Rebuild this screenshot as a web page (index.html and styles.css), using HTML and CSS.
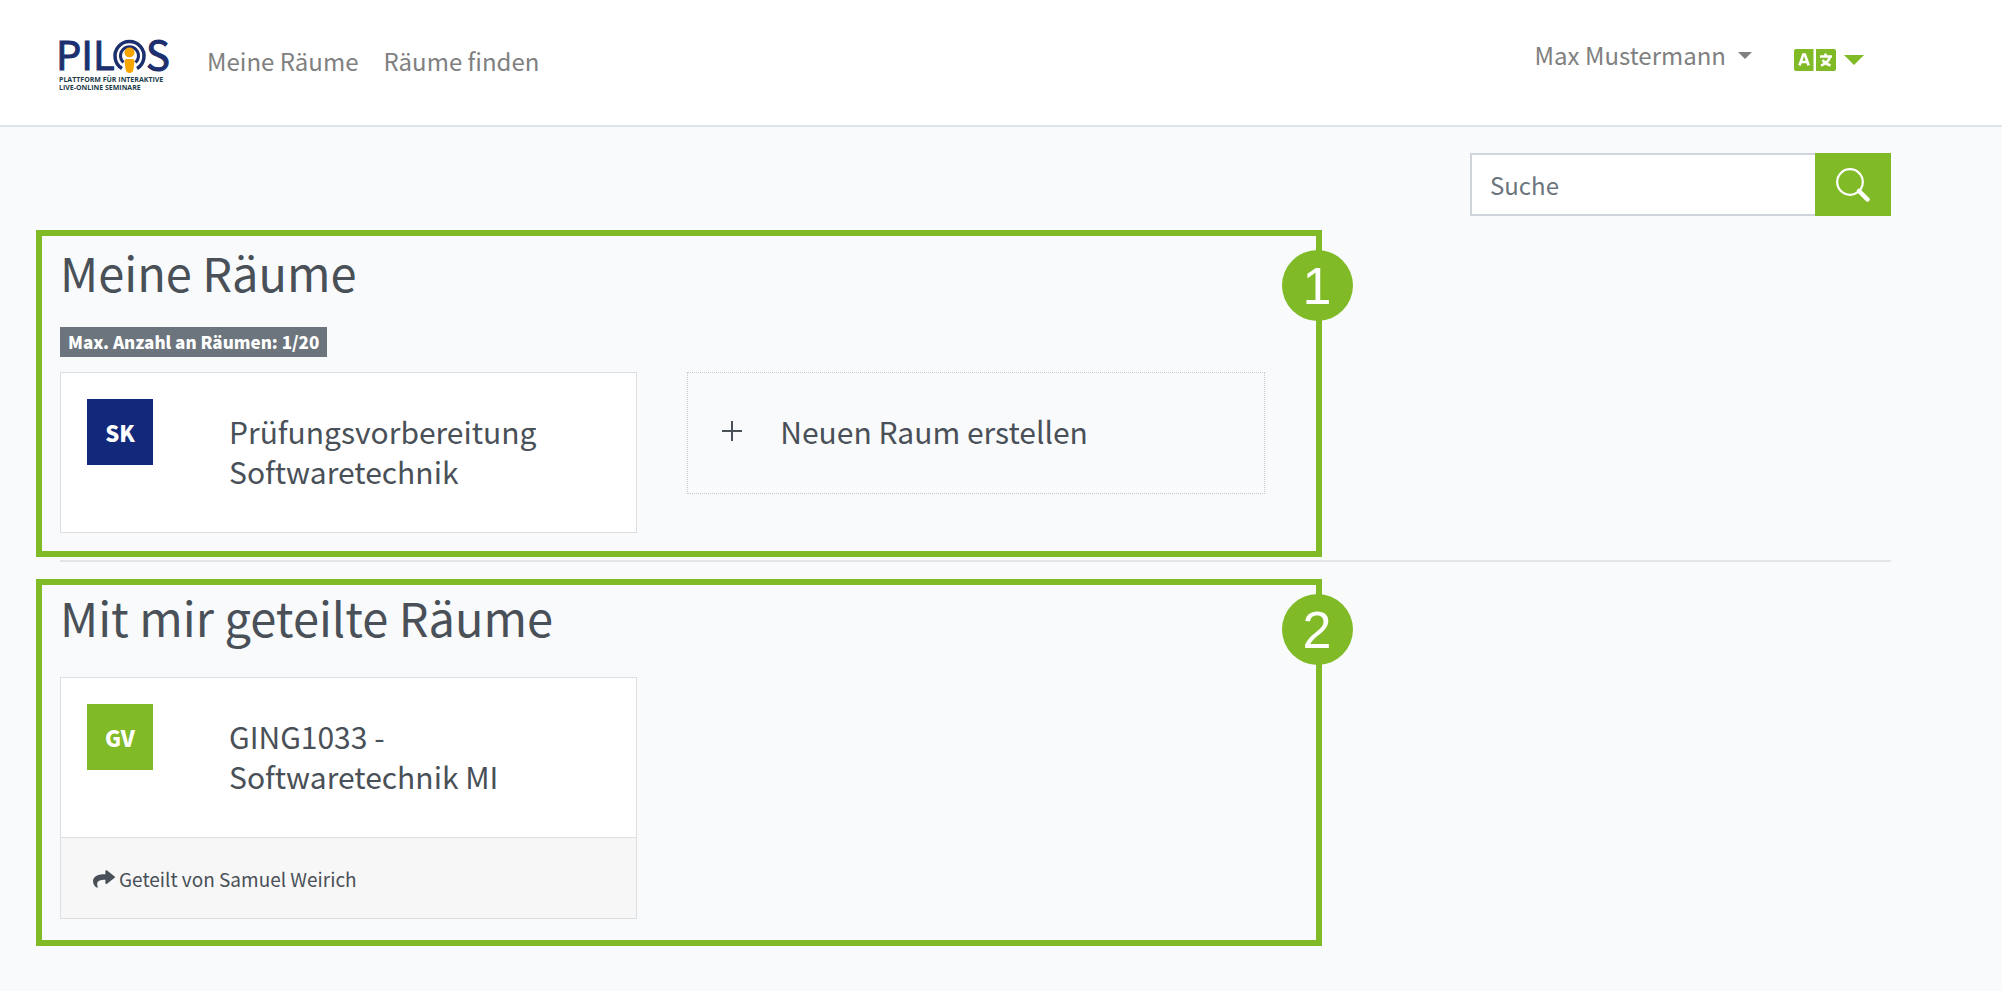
FILE: index.html
```html
<!DOCTYPE html>
<html lang="de">
<head>
<meta charset="utf-8">
<meta name="viewport" content="width=device-width, initial-scale=1">
<title>PILOS – Meine Räume</title>
<link rel="stylesheet" href="styles.css">
</head>
<body>
<header class="navbar">
  <a class="brand" href="#" aria-label="PILOS">
    <svg class="logo" viewBox="0 0 108 56" width="108" height="56">
      <g class="logo-word">
        <text x="-3" y="33">PIL</text>
        <text x="87" y="33">S</text>
      </g>
      <g fill="none" stroke="#1c2f6e" stroke-width="3.500">
        <path d="M63 31.500A14.500 14.500 0 1 1 78 31.500"/>
        <path d="M64.500 25.500A9 9 0 1 1 76.500 25.500" stroke-width="3"/>
      </g>
      <circle cx="70.500" cy="15.500" r="5" fill="#f7a600"/>
      <path d="M65.500 24q0-2 2-2h6q2 0 2 2l-1 8q-.5 4-4 4t-4-4z" fill="#f7a600"/>
      <g class="logo-claim">
        <text x="0" y="45">PLATTFORM FÜR INTERAKTIVE</text>
        <text x="0" y="53">LIVE-ONLINE SEMINARE</text>
      </g>
    </svg>
  </a>
  <nav class="nav-links">
    <a href="#">Meine Räume</a>
    <a href="#">Räume finden</a>
  </nav>
  <div class="nav-tools">
    <button class="user-menu" type="button">Max Mustermann
      <svg width="14" height="7" viewBox="0 0 14 7" aria-hidden="true"><path d="M0 0h14L7 7z" fill="currentColor"/></svg>
    </button>
    <button class="lang-menu" type="button" aria-label="Sprache">
      <svg width="42" height="22" viewBox="0 0 42 22" aria-hidden="true">
        <path d="M2 0h17.500v22H2q-2 0-2-2V2q0-2 2-2zM22 0h18q2 0 2 2v18q0 2-2 2H22z" fill="currentColor"/>
        <path d="M5.500 16.500L9.300 5.500h1.600l3.800 11M7 13h6.200" fill="none" stroke="#fff" stroke-width="2.600"/>
        <path d="M26 7.500h12M31.500 4.500v3M36 8q-2 6-9 8.500M28.500 11q3 4 8 5.500" fill="none" stroke="#fff" stroke-width="2.500"/>
      </svg>
      <svg width="20" height="10" viewBox="0 0 20 10" aria-hidden="true"><path d="M0 0h20L10 10z" fill="currentColor"/></svg>
    </button>
  </div>
</header>

<main class="content">
  <form class="search">
    <input type="search" placeholder="Suche" aria-label="Suche">
    <button type="submit" aria-label="Suchen">
      <svg width="34" height="34" viewBox="0 0 34 34" fill="none" stroke="#fff" aria-hidden="true">
        <circle cx="14" cy="14" r="12.800" stroke-width="2.200"/>
        <path d="M23 23l8.500 8.500" stroke-width="4.500" stroke-linecap="round"/>
      </svg>
    </button>
  </form>

  <section class="marked">
    <span class="marker">1</span>
    <h1>Meine Räume</h1>
    <p class="limit">Max. Anzahl an Räumen: 1/20</p>
    <div class="rooms">
      <article class="card">
        <div class="card-body">
          <span class="tile tile-own">SK</span>
          <h2>Prüfungsvorbereitung Softwaretechnik</h2>
        </div>
      </article>
      <button class="card card-new" type="button">
        <svg width="20" height="20" viewBox="0 0 20 20" aria-hidden="true"><path d="M10 0v20M0 10h20" stroke="currentColor" stroke-width="2"/></svg>
        <span>Neuen Raum erstellen</span>
      </button>
    </div>
  </section>

  <hr class="divider">

  <section class="marked marked-shared">
    <span class="marker">2</span>
    <h1>Mit mir geteilte Räume</h1>
    <div class="rooms">
      <article class="card">
        <div class="card-body">
          <span class="tile tile-shared">GV</span>
          <h2>GING1033 - Softwaretechnik MI</h2>
        </div>
        <footer class="card-footer">
          <svg width="22" height="20" viewBox="0 0 512 512" preserveAspectRatio="none" aria-hidden="true"><path fill="currentColor" d="M503.700 189.800L327.700 37.900C312.300 24.500 288 35.300 288 56v80.100C127.400 137.900 0 170.100 0 322.300c0 61.400 39.600 122.300 83.300 154.100 13.700 9.900 33.100-2.500 28.100-18.600C66.100 312.800 132.900 274.300 288 272.100V360c0 20.700 24.300 31.500 39.700 18.200l176-152c11.100-9.600 11.100-26.800 0-36.400z"/></svg>
          <span>Geteilt von Samuel Weirich</span>
        </footer>
      </article>
    </div>
  </section>
</main>
</body>
</html>
```
FILE: styles.css
```css
* {
  box-sizing: border-box;
}

body {
  margin: 0;
  min-height: 100vh;
  background: #f9fafc;
  color: #495057;
  font-family: "Noto Sans CJK SC", "Open Sans", sans-serif;
  font-size: 24px;
  line-height: 36px;
}

button {
  margin: 0;
  padding: 0;
  border: 0;
  background: none;
  color: inherit;
  font: inherit;
}

svg {
  display: block;
  flex: none;
}

.navbar {
  display: flex;
  align-items: flex-start;
  padding: 37px 138px 32px 59px;
  border-bottom: 2px solid #dfe4ec;
  background: #fff;
}

.logo {
  overflow: visible;
}

.logo-word {
  fill: #1c2f6e;
  stroke: #1c2f6e;
  stroke-width: 1px;
  font-size: 40px;
}

.logo-claim {
  fill: #1d3c4a;
  font-family: "Open Sans", sans-serif;
  font-size: 7px;
  font-weight: 700;
}

.nav-links {
  display: flex;
  gap: 25px;
  margin: 6px 0 0 40px;
}

.nav-links a {
  color: #808080;
  text-decoration: none;
}

.nav-tools {
  display: flex;
  align-items: center;
  gap: 42px;
  margin-left: auto;
}

.user-menu {
  display: flex;
  align-items: center;
  gap: 12px;
  color: #808080;
}

.lang-menu {
  display: flex;
  align-items: center;
  gap: 8px;
  padding-top: 10px;
  color: #80ba27;
}

.content {
  padding: 26px 111px 44px 36px;
}

.search {
  display: flex;
  width: 421px;
  max-width: 100%;
  margin: 0 0 14px auto;
}

.search input {
  flex: 1;
  min-width: 0;
  height: 63px;
  padding: 0 18px;
  border: 2px solid #ced4da;
  border-right: 0;
  border-radius: 0;
  background: #fff;
  color: #495057;
  font: inherit;
  appearance: none;
}

.search input::placeholder {
  color: #6c757d;
  opacity: 1;
}

.search button {
  display: grid;
  place-items: center;
  width: 76px;
  background: #80ba27;
}

.marked {
  position: relative;
  width: 69.3%;
  padding: 6px 51px 18px 18px;
  border: 6px solid #80ba27;
}

.marked-shared {
  padding-top: 2px;
  padding-bottom: 21px;
}

.marker {
  position: absolute;
  top: 14px;
  right: -37px;
  width: 71px;
  height: 71px;
  border-radius: 50%;
  background: #80ba27;
  color: #fff;
  font-family: "Liberation Sans", Arial, sans-serif;
  font-size: 52px;
  line-height: 72px;
  text-align: center;
}

.marked-shared .marker {
  top: 9px;
}

h1 {
  margin: 0;
  font-size: 47px;
  font-weight: 400;
  line-height: 60px;
}

.limit {
  width: fit-content;
  margin: 25px 0 15px;
  padding: 0 8px;
  background: #6c757d;
  color: #fff;
  font-size: 17px;
  font-weight: 900;
  line-height: 30px;
}

.rooms {
  display: grid;
  grid-template-columns: 1fr 1fr;
  align-items: start;
  gap: 50px;
}

.marked-shared .rooms {
  margin-top: 30px;
}

.card {
  border: 1px solid #dcdedf;
  background: #fff;
}

.card-body {
  display: grid;
  grid-template-columns: 66px 1fr;
  gap: 76px;
  align-items: start;
  padding: 26px 80px 41px 26px;
}

.tile {
  color: #fff;
  font-weight: 900;
  font-size: 22px;
  line-height: 66px;
  text-align: center;
}

.tile-own {
  background: #12287a;
}

.tile-shared {
  background: #80ba27;
}

h2,
.card-new {
  font-size: 30px;
  font-weight: 400;
  line-height: 40px;
}

h2 {
  margin: 12px 0 0;
}

.card-new {
  display: flex;
  align-items: center;
  gap: 38px;
  padding: 38px 34px 42px;
  border: 1px dotted #c8cbce;
  background: transparent;
}

.divider {
  height: 2px;
  margin: 3px 0 17px 24px;
  border: 0;
  background: #e2e4e6;
}

.card-footer {
  display: flex;
  align-items: center;
  gap: 4px;
  padding: 26px 32px 24px;
  border-top: 1px solid #dcdedf;
  background: #f7f7f7;
  font-size: 19px;
  line-height: 30px;
}
```
